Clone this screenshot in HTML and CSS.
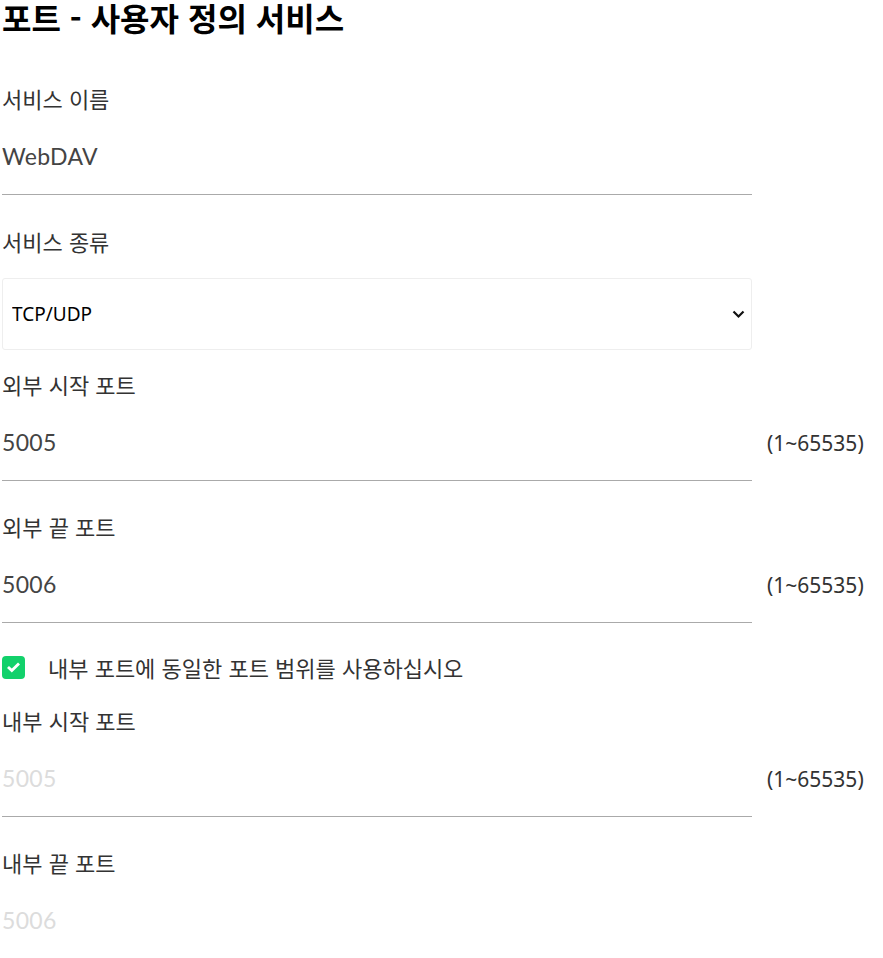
FILE: index.html
```html
<!DOCTYPE html>
<html lang="ko">
   <head>
      <meta charset="UTF-8" />
      <meta name="viewport" content="width=device-width, initial-scale=1.0" />
      <title>포트 - 사용자 정의 서비스</title>
      <link rel="stylesheet" href="styles.css">
   </head>
   <body>
      <div class="page">
         <h1 class="title">포트 - 사용자 정의 서비스</h1>

         <div class="field">
            <div class="label">서비스 이름</div>
            <div class="input-row">
               <input class="text-input" type="text" value="WebDAV" />
            </div>
         </div>

         <div class="field field-select">
            <div class="label">서비스 종류</div>
            <div class="select-box">
               <select class="select">
                  <option>TCP/UDP</option>
                  <option>TCP</option>
                  <option>UDP</option>
               </select>
               <svg class="chevron" width="13" height="9" viewBox="0 0 13 9">
                  <path d="M1.5 1.5 L6.5 6.5 L11.5 1.5" fill="none" stroke="#111" stroke-width="2.2" />
               </svg>
            </div>
         </div>

         <div class="field field-after-select">
            <div class="label">외부 시작 포트</div>
            <div class="input-row">
               <input class="text-input" type="text" value="5005" />
               <span class="hint">(1~65535)</span>
            </div>
         </div>

         <div class="field">
            <div class="label">외부 끝 포트</div>
            <div class="input-row">
               <input class="text-input" type="text" value="5006" />
               <span class="hint">(1~65535)</span>
            </div>
         </div>

         <label class="check-row">
            <span class="check">
               <svg width="15" height="12" viewBox="0 0 15 12">
                  <path d="M2 6 L5.8 9.6 L13 2.4" fill="none" stroke="#fff" stroke-width="2.8" />
               </svg>
            </span>
            <span class="check-text">내부 포트에 동일한 포트 범위를 사용하십시오</span>
         </label>

         <div class="field field-tight">
            <div class="label">내부 시작 포트</div>
            <div class="input-row">
               <input class="text-input" type="text" value="5005" disabled />
               <span class="hint">(1~65535)</span>
            </div>
         </div>

         <div class="field">
            <div class="label">내부 끝 포트</div>
            <div class="input-row">
               <input class="text-input" type="text" value="5006" disabled />
            </div>
         </div>
      </div>
   </body>
</html>
```

FILE: styles.css
```css
* {
   box-sizing: border-box;
}

body {
   margin: 0;
   background-color: #fff;
   font-family: 'Noto Sans CJK KR', 'Noto Sans', sans-serif;
   color: #333;
}

.page {
   padding: 0 2px;
}

.title {
   margin: 0 0 19px 0;
   font-size: 32px;
   line-height: 34px;
   font-weight: bold;
   color: #000;
}

.field {
   padding-top: 33px;
}

.field-select {
   padding-top: 34px;
}

.field-after-select {
   padding-top: 22px;
}

.field-tight {
   padding-top: 0;
   margin-top: 29px;
}

.label {
   font-size: 22px;
   line-height: 24px;
   color: #333;
}

.input-row {
   display: flex;
   align-items: center;
   margin-top: 30px;
}

.text-input {
   width: 750px;
   height: 55px;
   padding: 0 0 22px 0;
   border: none;
   border-bottom: 1px solid #aaa;
   border-radius: 0;
   outline: none;
   background: transparent;
   font-family: Lato, 'Noto Sans', sans-serif;
   font-size: 23px;
   line-height: 32px;
   letter-spacing: 0.3px;
   color: #444;
}

.text-input:disabled {
   color: #dcdcdc;
}

.hint {
   margin: 0 0 22px 15px;
   font-family: 'Noto Sans', sans-serif;
   font-size: 21px;
   color: #333;
}

.select-box {
   position: relative;
   width: 750px;
   margin-top: 25px;
}

.select {
   display: block;
   width: 100%;
   height: 72px;
   padding: 0 40px 0 9px;
   border: 1px solid #eee;
   border-radius: 3px;
   background: #fff;
   appearance: none;
   -webkit-appearance: none;
   font-family: 'Noto Sans', sans-serif;
   font-size: 19px;
   color: #000;
   outline: none;
}

.chevron {
   position: absolute;
   right: 7px;
   top: 32px;
   pointer-events: none;
}

.check-row {
   display: flex;
   align-items: center;
   gap: 23px;
   margin-top: 32px;
   cursor: pointer;
}

.check {
   display: flex;
   align-items: center;
   justify-content: center;
   width: 23px;
   height: 23px;
   border-radius: 4px;
   background-color: #12d16b;
}

.check-text {
   font-size: 22px;
   line-height: 24px;
   color: #333;
}
```
